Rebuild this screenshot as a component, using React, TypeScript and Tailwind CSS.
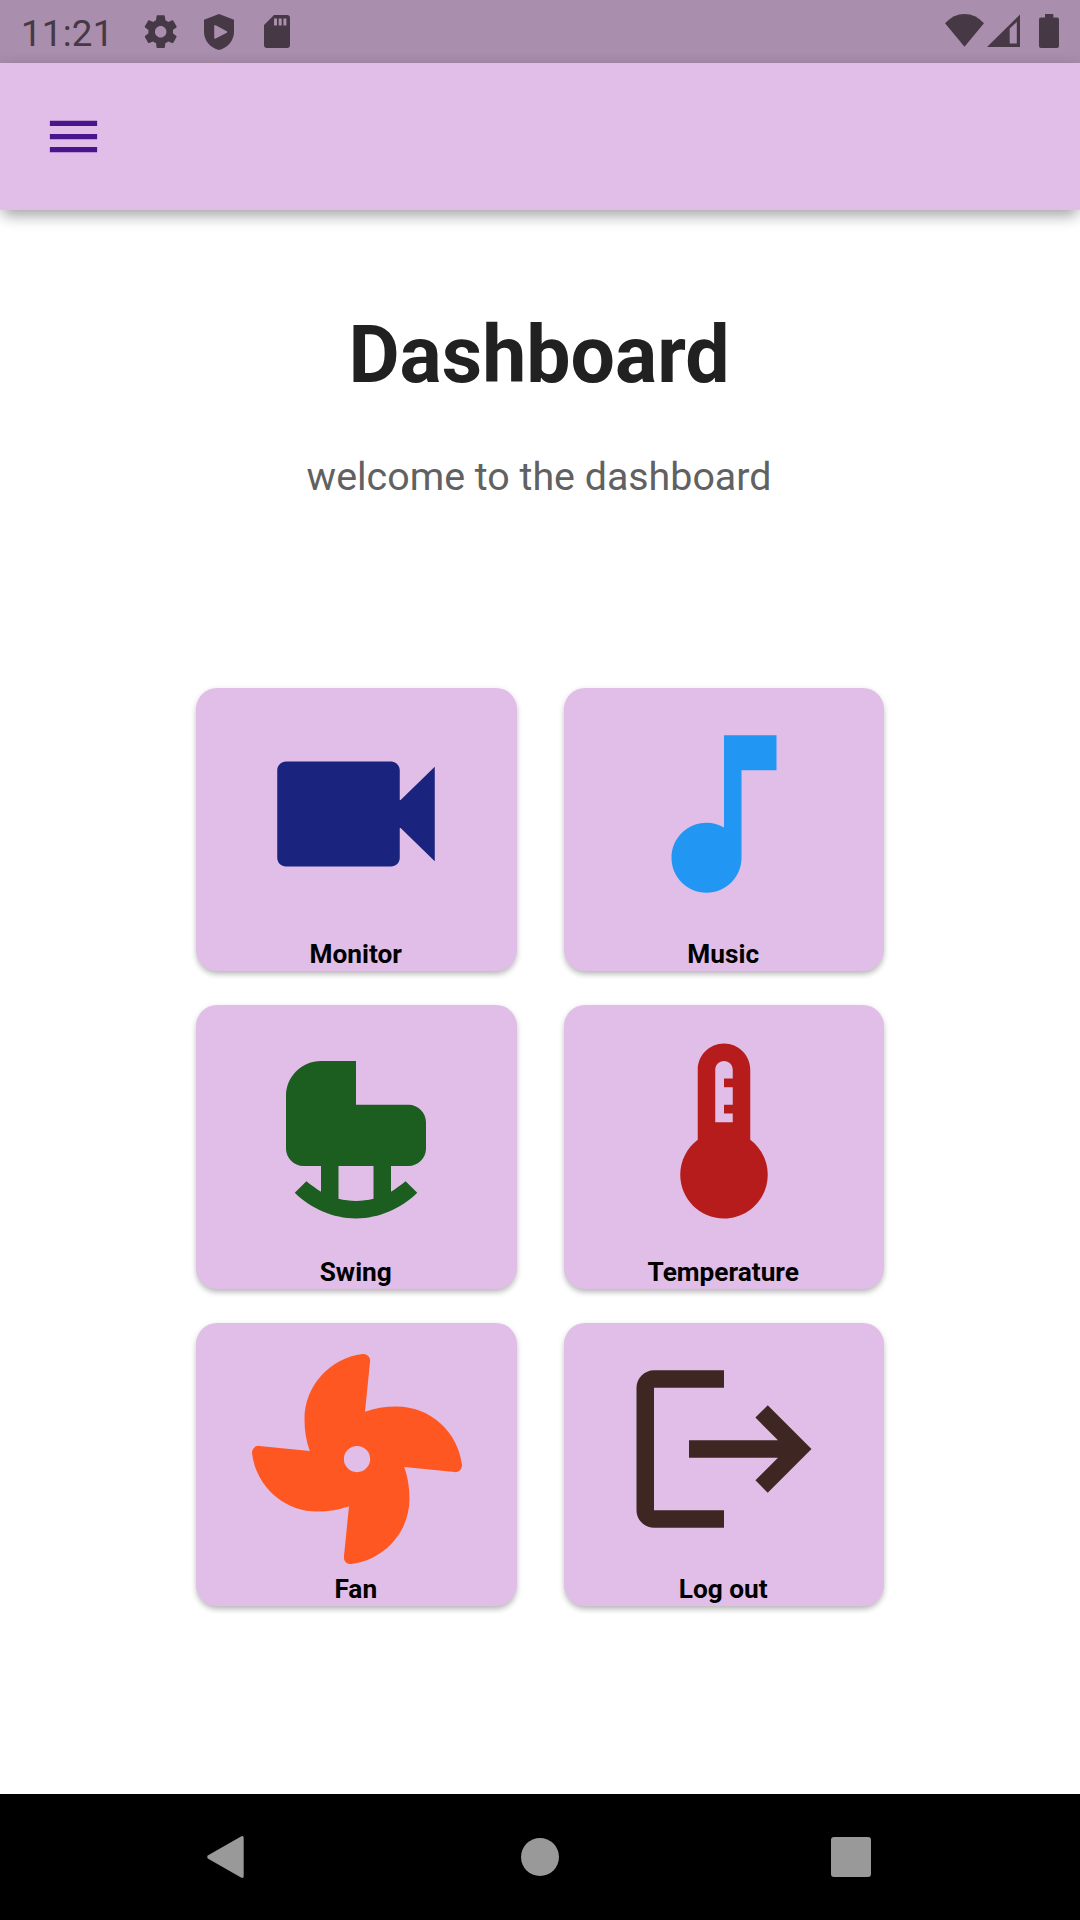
import type { ReactNode } from "react";

const MATERIAL = "0 0 24 24";

type Tile = { label: string; color: string; viewBox: string; path: string; lowered?: boolean };

const tiles: Tile[] = [
  {
    label: "Monitor",
    color: "text-[#1a237e]",
    viewBox: MATERIAL,
    path: "M17 10.4V7c0-.55-.45-1-1-1H4c-.55 0-1 .45-1 1v10c0 .55.45 1 1 1h12c.55 0 1-.45 1-1v-3.4h.1L21 17.4V6.600L17.100 10.400z",
  },
  {
    label: "Music",
    color: "text-[#2196f3]",
    viewBox: MATERIAL,
    path: "M12 3v10.55c-.59-.34-1.27-.55-2-.55-2.21 0-4 1.79-4 4s1.79 4 4 4 4-1.79 4-4V7h4V3h-6z",
  },
  {
    label: "Swing",
    color: "text-[#1b5e20]",
    viewBox: MATERIAL,
    path: "M18 9h-6V4H8C5.79 4 4 5.79 4 8v6c0 1.1.9 2 2 2h2v2.93c-.61-.35-1.16-.78-1.67-1.18L5 19.07C6.86 20.88 9.36 22 12 22s5.14-1.12 7-2.93l-1.33-1.32c-.51.4-1.06.83-1.67 1.18V16h2c1.1 0 2-.9 2-2v-3c0-1.1-.9-2-2-2zm-4 10.75c-.64.16-1.31.25-2 .25s-1.36-.09-2-.25V16h4v3.75z",
  },
  {
    label: "Temperature",
    color: "text-[#b71c1c]",
    viewBox: MATERIAL,
    path: "M15 13V5c0-1.66-1.34-3-3-3S9 3.34 9 5v8c-1.21.91-2 2.37-2 4 0 2.76 2.24 5 5 5s5-2.24 5-5c0-1.63-.79-3.09-2-4zm-4-8c0-.55.45-1 1-1s1 .45 1 1v1h-1v1h1v2h-1v1h1v1h-2V5z",
  },
  {
    label: "Fan",
    color: "text-[#ff5722]",
    viewBox: "0 0 512 512",
    path: "M352.57 128c-28.09 0-54.09 4.52-77.06 12.86l12.41-123.11C289 7.31 279.81-1.18 269.33.13 189.63 10.13 128 77.64 128 159.43c0 28.09 4.52 54.09 12.86 77.06L17.75 224.08C7.31 223-1.18 232.19.13 242.67c10 79.7 77.51 141.33 159.3 141.33 28.09 0 54.09-4.52 77.06-12.86l-12.41 123.11c-1.05 10.43 8.11 18.93 18.59 17.62 79.7-10 141.33-77.51 141.33-159.3 0-28.09-4.52-54.09-12.86-77.06l123.11 12.41c10.44 1.05 18.93-8.11 17.62-18.59-10-79.7-77.51-141.33-159.3-141.33zM256 288a32 32 0 1 1 32-32 32 32 0 0 1-32 32z",
    lowered: true,
  },
  {
    label: "Log out",
    color: "text-[#3e2723]",
    viewBox: MATERIAL,
    path: "M17 7l-1.41 1.41L18.17 11H8v2h10.17l-2.58 2.58L17 17l5-5zM4 5h8V3H4c-1.1 0-2 .9-2 2v14c0 1.1.9 2 2 2h8v-2H4V5z",
  },
];

function StatusIcon({ viewBox, className, children }: { viewBox: string; className: string; children: ReactNode }) {
  return (
    <svg viewBox={viewBox} className={className} fill="currentColor" fillRule="evenodd">
      {children}
    </svg>
  );
}

function StatusBar() {
  return (
    <div className="flex h-[63px] items-start justify-between bg-[#a98ead] pl-[21px] pr-[21px] text-[#463945]">
      <div className="flex items-start">
        <span className="w-[120px] pt-[12px] text-[36.75px] leading-[43px] tracking-[0.2px]">11:21</span>
        <StatusIcon viewBox="0 0 24 24" className="mt-[12px] size-[39.4px]">
          <path d="M19.43 12.98c.04-.32.07-.64.07-.98s-.03-.66-.07-.98l2.11-1.65c.19-.15.24-.42.12-.64l-2-3.46c-.12-.22-.39-.3-.61-.22l-2.49 1c-.52-.4-1.08-.73-1.69-.98l-.38-2.65C14.46 2.18 14.25 2 14 2h-4c-.25 0-.46.18-.49.42l-.38 2.65c-.61.25-1.17.59-1.69.98l-2.49-1c-.23-.09-.49 0-.61.22l-2 3.46c-.13.22-.07.49.12.64l2.11 1.65c-.04.32-.07.65-.07.98s.03.66.07.98l-2.11 1.65c-.19.15-.24.42-.12.64l2 3.46c.12.22.39.3.61.22l2.49-1c.52.4 1.08.73 1.69.98l.38 2.65c.03.24.24.42.49.42h4c.25 0 .46-.18.49-.42l.38-2.65c.61-.25 1.17-.59 1.69-.98l2.49 1c.23.09.49 0 .61-.22l2-3.46c.12-.22.07-.49-.12-.64l-2.11-1.65zM12 15.5c-1.93 0-3.5-1.57-3.5-3.5s1.57-3.5 3.5-3.5 3.5 1.57 3.5 3.5-1.57 3.5-3.5 3.5z" />
        </StatusIcon>
        <StatusIcon viewBox="0 0 30 36" className="ml-[23.6px] mt-[13.7px] h-[36px] w-[30px]">
          <path d="M15 0 30 5.8V18C30 26.5 23.5 34 15 36 6.500 34 0 26.500 0 18V5.800zM10.200 12V23.500Q10.200 25.200 11.700 24.400L22.800 18.800Q24 18 22.800 17.200L11.700 11.200Q10.200 10.500 10.200 12Z" />
        </StatusIcon>
        <StatusIcon viewBox="0 0 26 33" className="ml-[30px] mt-[15px] h-[33px] w-[26px]">
          <path d="M10 0H23Q26 0 26 3V30Q26 33 23 33H3Q0 33 0 30V10ZM10 3.500V10.500H13V3.500ZM14.700 3.500V10.500H17.700V3.500ZM19.400 3.500V10.500H22.400V3.500Z" />
        </StatusIcon>
      </div>
      <div className="flex items-start pt-[14px]">
        <StatusIcon viewBox="0 0 39 33" className="h-[33px] w-[39px]">
          <path d="M0 9.300Q8.500 0 19.500 0T39 9.300L19.500 32.700Z" />
        </StatusIcon>
        <StatusIcon viewBox="0 0 33 33" className="ml-[3px] h-[33px] w-[33px]">
          <path d="M0 33 33 .5V33ZM22.700 14.500V29.500H29.800V8Z" />
        </StatusIcon>
        <StatusIcon viewBox="0 0 20 34" className="ml-[19px] h-[34px] w-[20px]">
          <path d="M6 0H14.300V3.500H18Q20 3.500 20 5.500V32Q20 34 18 34H2Q0 34 0 32V5.500Q0 3.500 2 3.500H6Z" />
        </StatusIcon>
      </div>
    </div>
  );
}

function TileCard({ tile }: { tile: Tile }) {
  return (
    <button className="flex h-[283.6px] flex-col items-center rounded-[21px] bg-[#e1bee7] pt-[21px] shadow-[0_5px_6px_-2px_rgba(0,0,0,0.18),0_2px_6px_rgba(0,0,0,0.16)]">
      <svg
        viewBox={tile.viewBox}
        fill="currentColor"
        className={`size-[210px] shrink-0 ${tile.color} ${tile.lowered ? "ml-[1px] mt-[10px]" : "mb-[10px]"}`}
      >
        <path d={tile.path} />
      </svg>
      <span className="mt-[10.7px] pr-[1px] text-[26.25px] font-bold leading-[31px] text-black">{tile.label}</span>
    </button>
  );
}

export default function App() {
  return (
    <div className="flex h-[1920px] w-[1080px] flex-col overflow-hidden bg-white font-['Roboto',sans-serif]">
      <StatusBar />
      <header className="flex h-[147px] items-center bg-[#e1bee7] pl-[42px] shadow-[0_10px_14px_-4px_rgba(0,0,0,0.25),0_3px_14px_rgba(0,0,0,0.16)]">
        <button aria-label="Open menu">
          <svg viewBox={MATERIAL} className="size-[63px] text-[#4a148c]" fill="currentColor">
            <path d="M3 18h18v-2H3v2zm0-5h18v-2H3v2zm0-7v2h18V6H3z" />
          </svg>
        </button>
      </header>

      <main className="flex flex-1 flex-col items-center">
        <h1 className="mt-[99px] pr-[2px] text-[78.75px] font-bold leading-[92px] text-[#212121]">Dashboard</h1>
        <p className="mt-[53px] pr-[2px] text-[39.375px] leading-[46px] text-[#616161]">welcome to the dashboard</p>
        <div className="mt-[187.600px] grid grid-cols-[320.5px_320.5px] gap-x-[47px] gap-y-[34px]">
          {tiles.map((tile) => (
            <TileCard key={tile.label} tile={tile} />
          ))}
        </div>
      </main>

      <nav className="grid h-[126px] grid-cols-3 items-center bg-black text-[#999999]">
        <svg viewBox="0 0 37 42" className="ml-[207px] h-[42px] w-[37px]" fill="currentColor">
          <path d="M34 .4Q36.700-.8 36.700 2V40Q36.700 42.800 34 41.600L1.200 22.800Q-.8 21 1.200 19.200Z" />
        </svg>
        <span className="size-[38.500px] justify-self-center rounded-full bg-current" />
        <span className="ml-[111px] size-[40px] rounded-[3px] bg-current" />
      </nav>
    </div>
  );
}
